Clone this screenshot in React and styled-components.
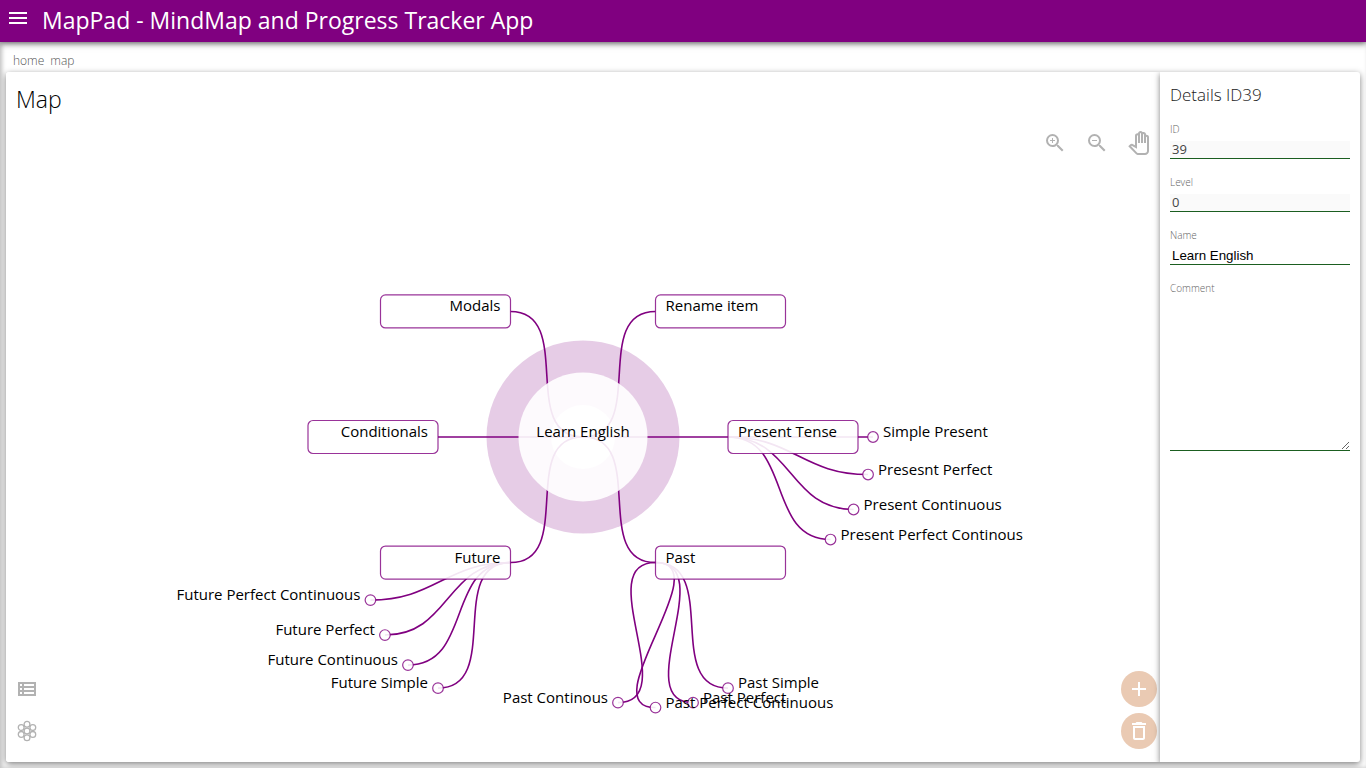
import React from "react";
import styled, { createGlobalStyle } from "styled-components";
import {
  MdMenu,
  MdZoomIn,
  MdZoomOut,
  MdOutlinePanTool,
  MdOutlineViewList,
  MdAdd,
  MdDeleteOutline,
} from "react-icons/md";

const GlobalStyle = createGlobalStyle`
  *, *::before, *::after { box-sizing: border-box; }
  body {
    margin: 0;
    background: #fff;
    color: #000;
    font-family: "Open Sans", "Noto Sans", sans-serif;
  }
`;

const Page = styled.div`
  display: flex;
  flex-direction: column;
  min-height: 100vh;
`;

const TopBar = styled.header`
  position: relative;
  z-index: 1;
  display: flex;
  align-items: flex-start;
  gap: 12px;
  height: 42px;
  padding: 0 6px;
  background: #800080;
  color: #fff;
  box-shadow: 0 2px 6px rgba(0, 0, 0, 0.5);
`;

const MenuButton = styled.button`
  display: flex;
  align-items: center;
  height: 36px;
  padding: 0;
  border: 0;
  background: none;
  color: inherit;
  cursor: pointer;
`;

const AppTitle = styled.h1`
  margin: 0;
  font-size: 23px;
  font-weight: 400;
  line-height: 40px;
  white-space: nowrap;
`;

const Content = styled.div`
  flex: 1;
  display: flex;
  flex-direction: column;
  padding: 0 6px 6px;
  box-shadow: inset 2px 0 4px rgba(0, 0, 0, 0.25);
`;

const Breadcrumb = styled.nav`
  display: flex;
  gap: 6px;
  height: 30px;
  padding: 10px 7px 0;
  font-size: 12px;
  font-weight: 300;
  line-height: 18px;
`;

const Crumb = styled.a`
  color: #555;
  text-decoration: none;
`;

const CardShadow = styled.div`
  flex: 1;
  display: flex;
  border-radius: 3px;
  box-shadow: 0 2px 6px rgba(0, 0, 0, 0.5);
`;

const Card = styled.main`
  flex: 1;
  display: flex;
  overflow: hidden;
  border-radius: 3px;
  background: #fff;
`;

const MapPanel = styled.section`
  position: relative;
  flex: 1;
  display: flex;
  flex-direction: column;
  min-width: 0;
`;

const MapTitle = styled.h2`
  height: 40px;
  margin: 0;
  padding: 12px 10px 0;
  font-size: 23px;
  font-weight: 300;
  line-height: 30px;
`;

const Canvas = styled.div`
  position: relative;
  flex: 1;
  display: flex;
`;

const MapDrawing = styled.svg`
  flex: 1;
  width: 100%;
  min-width: 0;
  font-size: 15px;
`;

const Tools = styled.div`
  position: absolute;
  display: flex;
  flex-direction: ${(p) => (p.$column ? "column" : "row")};
  gap: 6px;
  ${(p) => p.$v}: 13px;
  ${(p) => p.$h}: 3px;
`;

const IconButton = styled.button`
  display: flex;
  align-items: center;
  justify-content: center;
  width: 36px;
  height: 36px;
  padding: 0;
  border: 0;
  border-radius: 50%;
  background: ${(p) => (p.$filled ? "#eacab3" : "none")};
  color: ${(p) => (p.$filled ? "#fff" : "#b2b2b2")};
  cursor: pointer;
`;

const Details = styled.aside`
  z-index: 1;
  flex: 0 0 200px;
  display: flex;
  flex-direction: column;
  gap: 15px;
  padding: 10px;
  background: #fff;
  box-shadow: 0 2px 6px rgba(0, 0, 0, 0.5);
`;

const DetailsTitle = styled.h3`
  height: 24px;
  margin: 0;
  color: #222;
  font-size: 17px;
  font-weight: 300;
  line-height: 26px;
`;

const Field = styled.div`
  display: flex;
  flex-direction: column;
`;

const Label = styled.label`
  height: 20px;
  color: #666;
  font-size: 10px;
  font-weight: 300;
  line-height: 16px;
`;

const TextInput = styled.input`
  width: 100%;
  height: 18px;
  padding: 0 2px;
  border: 0;
  border-bottom: 1px solid #1b5e20;
  border-radius: 0;
  outline: 0;
  background: #fff;
  color: #000;
  font-family: "Liberation Sans", Arial, sans-serif;

  &:disabled {
    padding-bottom: 2px;
    background: #fafafa;
    color: #444;
    font-family: "Open Sans", sans-serif;
    font-size: 13px;
  }
`;

const TextArea = styled.textarea`
  display: block;
  width: 100%;
  height: 151px;
  padding: 2px;
  border: 0;
  border-bottom: 1px solid #1b5e20;
  outline: 0;
  background: #fff;
  resize: both;
`;

const RADIUS = 145;
const REACH = 65;

const tree = [
  { name: "Modals", angle: 240 },
  { name: "Rename item", angle: 300 },
  { name: "Conditionals", angle: 180 },
  {
    name: "Present Tense", angle: 0,
    children: ["Simple Present", "Presesnt Perfect", "Present Continuous", "Present Perfect Continous"],
  },
  {
    name: "Future", angle: 120,
    children: ["Future Simple", "Future Continuous", "Future Perfect", "Future Perfect Continuous"],
  },
  {
    name: "Past", angle: 60,
    children: ["Past Simple", "Past Perfect", "Past Perfect Continuous", "Past Continous"],
  },
];

function place(name, origin, angle) {
  const rad = (angle * Math.PI) / 180;
  return {
    name,
    x: origin.x + RADIUS * Math.cos(rad),
    y: origin.y + RADIUS * Math.sin(rad),
    side: angle > 90 && angle < 270 ? -1 : 1,
  };
}

// Every child fans out around its parent, 15 degrees after the one before.
const root = { x: 0, y: 0 };
const branches = tree.map(({ name, angle, children = [] }) => {
  const node = place(name, root, angle);
  return { ...node, leaves: children.map((child, i) => place(child, node, angle + 15 * i)) };
});
const leaves = branches.flatMap((b) => b.leaves);

function linkPath(from, to) {
  const reach = REACH * to.side;
  return `M${from.x},${from.y} C${from.x + reach},${from.y} ${to.x - reach},${to.y} ${to.x},${to.y}`;
}

const Link = styled.path`
  fill: none;
  stroke: #800080;
  stroke-width: 1.6px;
`;

const Box = styled.rect`
  fill: rgba(255, 255, 255, 0.9);
  stroke: rgba(128, 0, 128, 0.8);
  stroke-width: 1.2px;
`;

const Dot = styled.circle`
  fill: rgba(255, 255, 255, 0.9);
  stroke: rgba(128, 0, 128, 0.8);
  stroke-width: 1.2px;
`;

const Halo = styled.circle`
  fill: ${(p) => (p.$tinted ? "rgba(128, 0, 128, 0.2)" : "rgba(255, 255, 255, 0.9)")};
`;

const NodeText = styled.text`
  text-anchor: ${(p) => (p.$side === 0 ? "middle" : p.$side > 0 ? "start" : "end")};
`;

function MindMap() {
  return (
    <MapDrawing viewBox="-577 -325 1154 650" role="img" aria-label="Mind map">
      <Halo $tinted r="96.5" />
      <Halo r="32" />
      {branches.map((b) => (
        <g key={b.name}>
          <Link d={linkPath(root, b)} />
          {b.leaves.map((l) => (
            <Link key={l.name} d={linkPath(b, l)} />
          ))}
        </g>
      ))}
      <Halo r="64.5" />
      {branches.map((b) => (
        <Box key={b.name} x={b.side > 0 ? b.x : b.x - 130} y={b.y - 16.5} width="130" height="33" rx="5" />
      ))}
      {leaves.map((l) => (
        <Dot key={l.name} cx={l.x} cy={l.y} r="5.3" />
      ))}
      <NodeText $side={0}>Learn English</NodeText>
      {[...branches, ...leaves].map((n) => (
        <NodeText key={n.name} $side={n.side} x={n.x + 10 * n.side} y={n.y}>
          {n.name}
        </NodeText>
      ))}
    </MapDrawing>
  );
}

function FlowerIcon() {
  const cells = [[12, 12], [12, 5.3], [12, 18.7], [6.2, 8.6], [17.8, 8.6], [6.2, 15.4], [17.8, 15.4]];
  return (
    <svg width="24" height="24" viewBox="0 0 24 24" fill="none" stroke="currentColor" strokeWidth="1.3" aria-hidden="true">
      {cells.map(([cx, cy]) => (
        <circle key={`${cx}-${cy}`} cx={cx} cy={cy} r="2.9" />
      ))}
    </svg>
  );
}

export default function App() {
  return (
    <>
      <GlobalStyle />
      <Page>
        <TopBar>
          <MenuButton aria-label="Menu"><MdMenu size={24} /></MenuButton>
          <AppTitle>MapPad - MindMap and Progress Tracker App</AppTitle>
        </TopBar>
        <Content>
          <Breadcrumb aria-label="Breadcrumb">
            <Crumb href="#home">home</Crumb>
            <Crumb href="#map">map</Crumb>
          </Breadcrumb>
          <CardShadow>
            <Card>
              <MapPanel>
                <MapTitle>Map</MapTitle>
                <Canvas>
                  <MindMap />
                  <Tools $v="top" $h="right">
                    <IconButton aria-label="Zoom in"><MdZoomIn size={24} /></IconButton>
                    <IconButton aria-label="Zoom out"><MdZoomOut size={24} /></IconButton>
                    <IconButton aria-label="Pan"><MdOutlinePanTool size={24} /></IconButton>
                  </Tools>
                  <Tools $column $v="bottom" $h="left">
                    <IconButton aria-label="List view"><MdOutlineViewList size={24} /></IconButton>
                    <IconButton aria-label="Map view"><FlowerIcon /></IconButton>
                  </Tools>
                  <Tools $column $v="bottom" $h="right">
                    <IconButton $filled aria-label="Add item"><MdAdd size={24} /></IconButton>
                    <IconButton $filled aria-label="Delete item"><MdDeleteOutline size={24} /></IconButton>
                  </Tools>
                </Canvas>
              </MapPanel>
              <Details>
                <DetailsTitle>Details ID39</DetailsTitle>
                <Field>
                  <Label htmlFor="item-id">ID</Label>
                  <TextInput id="item-id" defaultValue="39" disabled />
                </Field>
                <Field>
                  <Label htmlFor="item-level">Level</Label>
                  <TextInput id="item-level" defaultValue="0" disabled />
                </Field>
                <Field>
                  <Label htmlFor="item-name">Name</Label>
                  <TextInput id="item-name" defaultValue="Learn English" />
                </Field>
                <Field>
                  <Label htmlFor="item-comment">Comment</Label>
                  <TextArea id="item-comment" />
                </Field>
              </Details>
            </Card>
          </CardShadow>
        </Content>
      </Page>
    </>
  );
}
